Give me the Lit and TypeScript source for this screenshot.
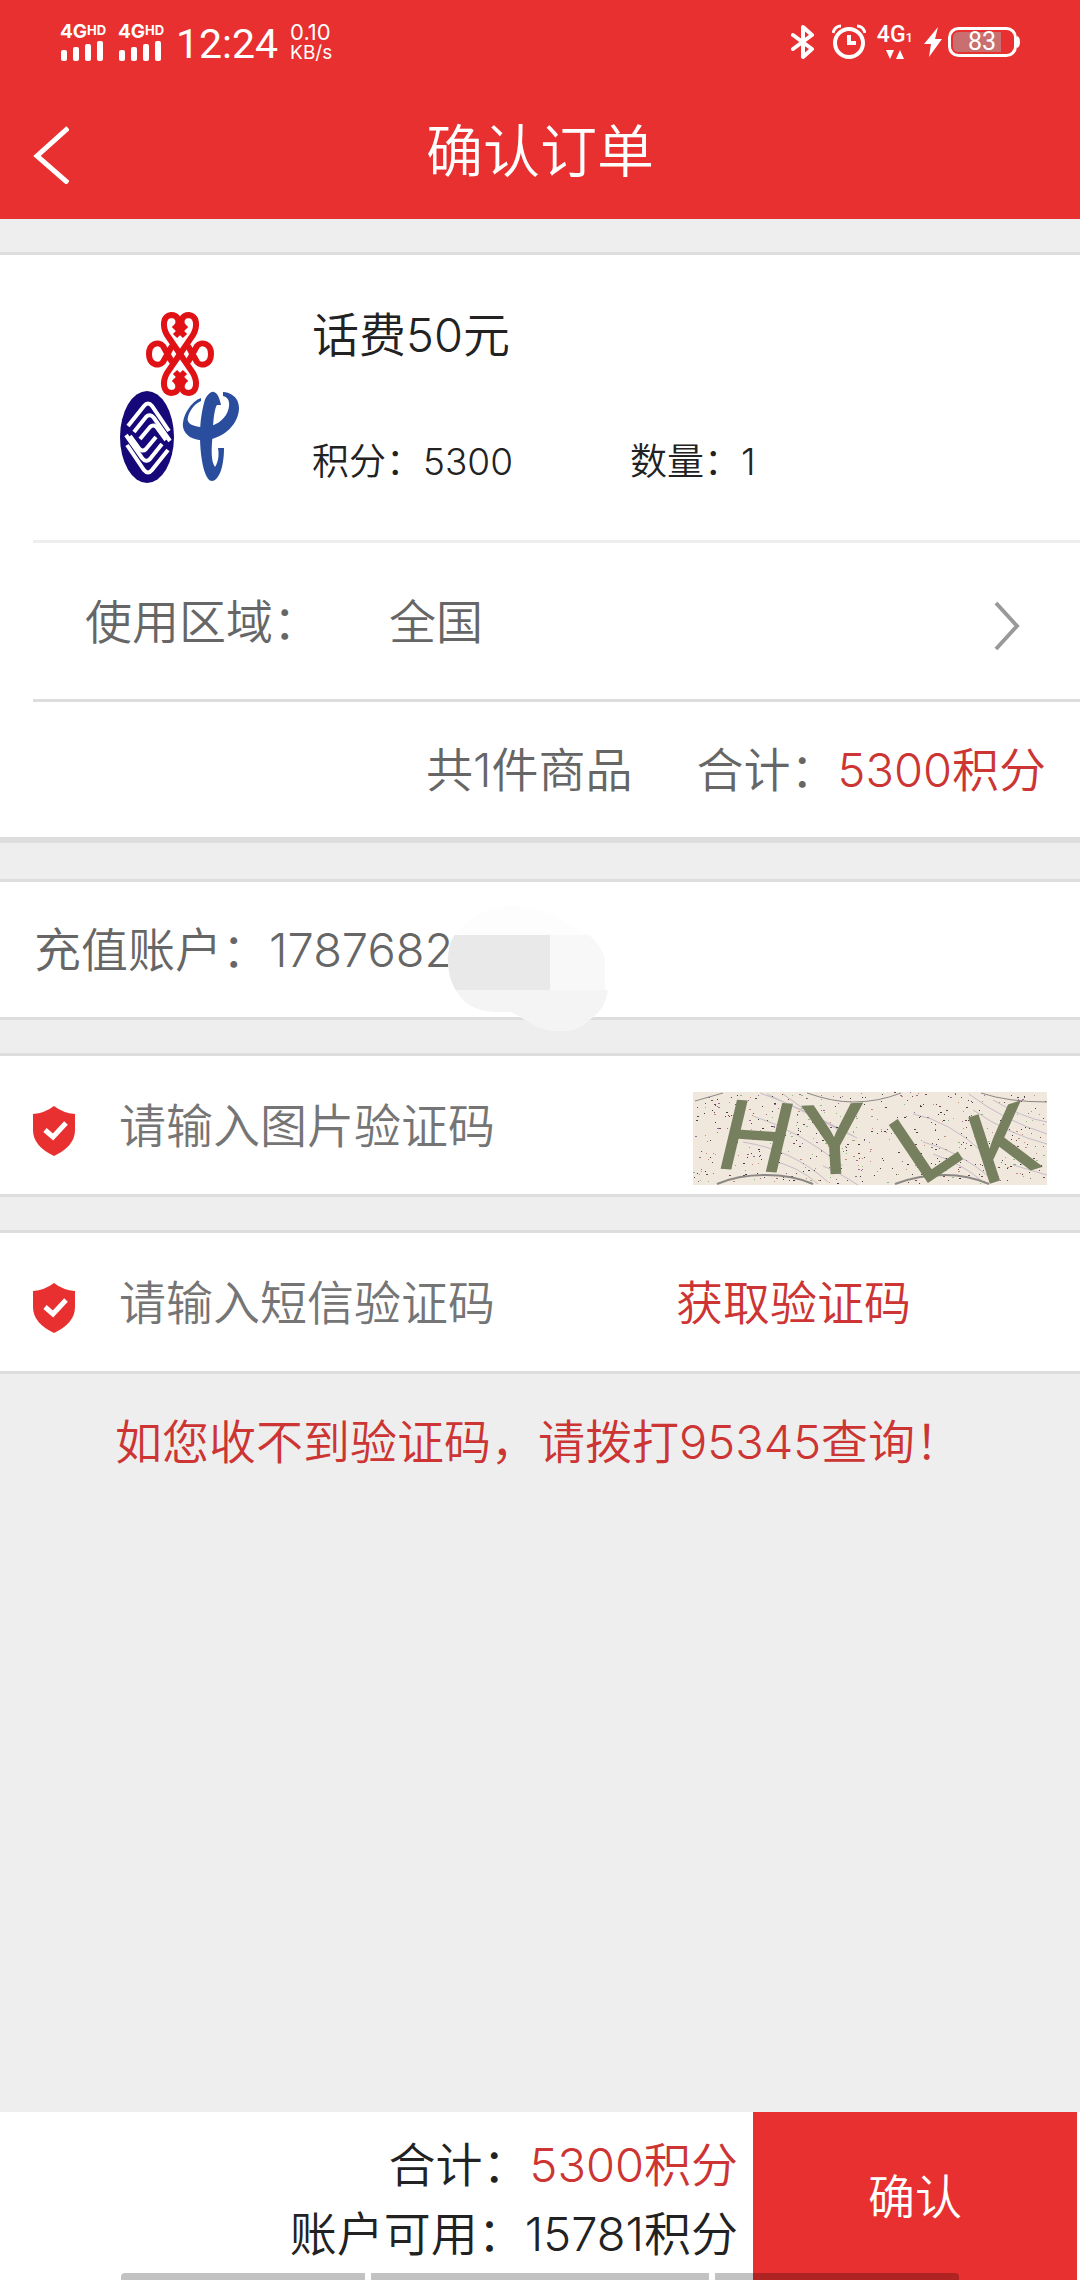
import { LitElement, html, svg, css } from "lit";
import { customElement } from "lit/decorators.js";

const fontStack = css`Inter, "Noto Sans CJK SC", sans-serif`;

/** Small repeatable generator, so the captcha speckle is stable. */
function seeded(seed: number) {
  let s = seed;
  return () => {
    s = (s * 16807) % 2147483647;
    return s / 2147483647;
  };
}

@customElement("status-bar")
export class StatusBar extends LitElement {
  static styles = css`
    :host {
      display: flex;
      justify-content: space-between;
      height: 84px;
      padding: 0 60px;
      box-sizing: border-box;
      color: #fff;
      font-family: Roboto, sans-serif;
    }
    .side {
      display: flex;
      align-items: center;
    }
    .left {
      gap: 12px;
    }
    .sim {
      width: 46px;
    }
    .net {
      display: flex;
      align-items: flex-start;
      font: 700 19px/16px Inter, sans-serif;
    }
    .hd {
      font-size: 13px;
      line-height: 12px;
    }
    .bars {
      display: block;
    }
    .clock {
      font-size: 41px;
      font-weight: 400;
      line-height: 48px;
      padding-top: 4px;
    }
    .speed {
      font: 400 19px/20px Inter, sans-serif;
    }
    .rate {
      font-size: 22px;
      line-height: 22px;
    }
    .cell {
      font: 500 23px/20px Roboto, sans-serif;
      text-align: center;
    }
    .sub {
      font-size: 13px;
    }
    .arrows {
      display: block;
      margin: 2px auto 0;
    }
    .battery {
      position: relative;
      display: flex;
      width: 72px;
      height: 30px;
    }
    .level {
      position: absolute;
      inset: 0 4px 0 0;
      font: 400 25px/30px Roboto, sans-serif;
      text-align: center;
    }
    .right svg {
      flex: none;
    }
    .alarm {
      margin: 0 11px 0 17px;
    }
    .bolt {
      margin: 0 6px 0 11px;
    }
  `;

  private sim() {
    return html`<div class="sim">
      <div class="net">4G<span class="hd">HD</span></div>
      <svg class="bars" width="44" height="21" fill="#fff">
        <rect x="1" y="10" width="6" height="11" rx="2" />
        <rect x="13" y="7" width="6" height="14" rx="2" />
        <rect x="25" y="4" width="6" height="17" rx="2" />
        <rect x="37" y="1" width="6" height="20" rx="2" />
      </svg>
    </div>`;
  }

  render() {
    return html`
      <div class="side left">
        ${this.sim()} ${this.sim()}
        <div class="clock">12:24</div>
        <div class="speed"><div class="rate">0.10</div><div>KB/s</div></div>
      </div>
      <div class="side right">
        <svg width="24" height="36" viewBox="0 0 24 36" fill="none" stroke="#fff" stroke-width="4" stroke-linecap="round" stroke-linejoin="round">
          <path d="M2 11 L21 25 L12 33 V3 L21 11 L2 25" />
        </svg>
        <svg class="alarm" width="34" height="36" viewBox="0 0 34 36" fill="none" stroke="#fff">
          <circle cx="17" cy="19" r="14" stroke-width="4" />
          <path d="M17 11 V19 H24" stroke-width="4" />
          <path d="M1 9 C2 5 5 2 9 2 M33 9 C32 5 29 2 25 2" stroke-width="3" />
        </svg>
        <div class="cell">
          4G<span class="sub">1</span>
          <svg class="arrows" width="20" height="9" fill="#fff"><path d="M1 0 H9 L5 9Z M11 9 H19 L15 0Z" /></svg>
        </div>
        <svg class="bolt" width="18" height="30" viewBox="0 0 18 30" fill="#fff">
          <path d="M14 0 L0 17 H7 L5 30 L18 12 H11Z" />
        </svg>
        <div class="battery">
          <svg width="72" height="30" viewBox="0 0 72 30">
            <path d="M11 5 H53 V25 H11 Q5 25 5 19 V11 Q5 5 11 5Z" fill="#c96f6f" />
            <rect x="1.500" y="1.500" width="66" height="27" rx="9" fill="none" stroke="#fff" stroke-width="3" />
            <path d="M69 9 Q72 10 72 15 Q72 20 69 21Z" fill="#fff" />
          </svg>
          <span class="level">83</span>
        </div>
      </div>
    `;
  }
}

@customElement("captcha-image")
export class CaptchaImage extends LitElement {
  static styles = css`
    :host {
      display: block;
    }
    .picture {
      display: block;
      width: 354px;
      height: 93px;
      overflow: visible;
    }
    .glyph {
      font: 500 96px Inter, sans-serif;
      fill: #76805f;
      text-anchor: middle;
    }
    .slanted {
      font-style: italic;
    }
  `;

  render() {
    const rnd = seeded(4711);
    const tones = ["#3c3a44", "#7b4550", "#9d6a9a", "#86c07a", "#c98a72", "#4a4a4a"];
    const dots = Array.from({ length: 560 }, () => ({
      x: Math.round(rnd() * 352),
      y: Math.round(rnd() * 91),
      w: rnd() > 0.7 ? 2 : 1,
      c: tones[Math.floor(rnd() * tones.length)],
    }));
    const scratches = [
      "M67 1 Q110 16 164 46", "M74 2 Q120 24 160 44", "M90 2 Q125 28 150 40",
      "M60 24 Q105 38 150 74", "M50 50 Q100 58 135 90", "M76 68 Q105 74 125 92",
      "M130 74 Q145 80 165 93", "M220 22 Q255 28 292 62", "M230 50 Q265 58 300 88",
      "M276 2 Q310 28 354 42", "M280 18 Q315 42 354 52", "M300 8 Q330 26 354 30",
      "M240 62 Q270 72 290 90", "M320 73 L354 83",
    ];
    return html`<svg class="picture" viewBox="0 0 354 93" role="img" aria-label="图片验证码">
      <rect width="354" height="93" fill="#f0e7dd" />
      ${scratches.map((d) => svg`<path d=${d} fill="none" stroke="#c6bcc8" stroke-width="1" />`)}
      ${dots.map((p) => svg`<rect x=${p.x} y=${p.y} width=${p.w} height="1" fill=${p.c} />`)}
      <g fill="none" stroke="#8b8784" stroke-width="1">
        <path d="M2 9 Q16 5 30 1 M114 1 Q140 10 160 10 Q185 10 208 1 M288 1 Q315 10 354 10" />
        <path d="M24 92 Q45 83 72 83 Q100 83 120 92 M202 92 Q225 83 252 83 Q275 83 296 92" stroke-width="2" />
      </g>
      <text class="glyph slanted" x="60" y="79" transform="rotate(4 60 79)">H</text>
      <text class="glyph" x="143" y="82" transform="rotate(-3 143 82)">Y</text>
      <text class="glyph" x="251" y="80" transform="rotate(-34 251 80)">L</text>
      <text class="glyph" x="321" y="84" transform="rotate(-18 321 84)">K</text>
    </svg>`;
  }
}

@customElement("app-root")
export class AppRoot extends LitElement {
  static styles = css`
    :host {
      display: flex;
      flex-direction: column;
      min-height: 100vh;
      background: #eee;
      color: #666;
      font-family: ${fontStack};
      font-size: 47px;
      font-weight: 350;
      line-height: 69px;
    }
    button,
    input {
      font: inherit;
      color: inherit;
      background: none;
      border: 0;
      padding: 0;
      margin: 0;
      border-radius: 0;
      text-align: left;
    }
    .top {
      background: #e7302f;
      color: #fff;
    }
    .nav {
      display: grid;
      grid-template-columns: 1fr auto 1fr;
      align-items: center;
      height: 135px;
      padding: 0 33px;
    }
    .title {
      margin: 0;
      font-size: 57px;
      font-weight: inherit;
    }
    .back {
      display: block;
      padding-top: 6px;
    }
    .block {
      display: block;
    }
    .content {
      display: flex;
      flex-direction: column;
      gap: 33px;
      padding-top: 33px;
      flex: 1;
    }
    .card {
      position: relative;
      background: #fff;
      border-top: 3px solid #dcdedd;
      border-bottom: 3px solid #dcdedd;
    }
    .order {
      border-bottom-width: 6px;
      margin-bottom: 3px;
    }
    .product {
      display: flex;
      gap: 72px;
      height: 285px;
      padding: 56px 33px 0 120px;
      box-sizing: border-box;
      color: #222;
    }
    .info {
      flex: 1;
      line-height: 48px;
    }
    .name {
      margin: 0;
      font-size: 47px;
      font-weight: inherit;
    }
    .facts {
      display: flex;
      gap: 117px;
      margin-top: 79px;
      font-size: 37px;
    }
    .line {
      display: flex;
      align-items: center;
      margin-left: 33px;
      border-top: 3px solid #eee;
    }
    .region {
      height: 159px;
      padding: 0 60px 0 52px;
      box-sizing: border-box;
    }
    .pick {
      display: flex;
      flex: 1;
      align-items: center;
      gap: 69px;
    }
    .chevron {
      margin-left: auto;
      padding-top: 10px;
    }
    .sum {
      justify-content: flex-end;
      gap: 64px;
      height: 138px;
      padding-right: 34px;
      box-sizing: border-box;
      border-color: #dcdedd;
    }
    .red {
      color: #cc3533;
    }
    .account {
      height: 135px;
      padding: 0 34px;
      display: flex;
      align-items: center;
    }
    .mask {
      position: absolute;
      left: 448px;
      top: 24px;
    }
    .field {
      display: flex;
      align-items: center;
      height: 138px;
      padding: 0 33px;
    }
    .shield {
      flex: none;
      margin: 12px 44px 0 0;
    }
    .captcha {
      align-self: flex-end;
      margin-bottom: 9px;
    }
    .entry {
      flex: 1;
      min-width: 0;
      height: 100%;
      outline: none;
    }
    .entry::placeholder {
      color: #757575;
      opacity: 1;
    }
    .send {
      flex: none;
      width: 371px;
      height: 100%;
    }
    .hint {
      margin: 0;
      padding: 0 33px 0 115px;
    }
    .footer {
      position: relative;
      display: flex;
      height: 168px;
      background: #fff;
      color: #222;
    }
    .totals {
      flex: 1;
      padding: 18px 15px 0 0;
      text-align: right;
    }
    .confirm {
      width: 30%;
      margin-right: 3px;
      background: #e7302f;
      color: #fff;
      text-align: center;
    }
    .gesture {
      position: absolute;
      left: 121px;
      right: 121px;
      bottom: 0;
      display: flex;
      gap: 6px;
      height: 7px;
      overflow: hidden;
      border-radius: 4px 4px 0 0;
      pointer-events: none;
    }
    .grip {
      flex: 244;
      background: rgba(0, 0, 0, 0.24);
    }
    .mid {
      flex: 338;
    }
  `;

  private logos() {
    const loop = "M60 43 L47 24 C42 15 43 5 51 4 C58 4 61 11 56 16 L65 25";
    const bar = "M60 43 L73 24 C78 15 77 5 69 4 C62 4 59 11 64 16 L55 25";
    const band = ["M8 115 L24 95 Q28 90 32 95 L49 120", "M14 121 L26 106 Q30 102 34 107 L50 130", "M20 128 L30 116 Q34 112 38 118 L46 129"];
    return html`<svg class="block" width="120" height="172" viewBox="0 0 120 172" role="img" aria-label="话费">
      <g fill="none" stroke="#e01216" stroke-width="6">
        <path d=${loop} /><path d=${bar} />
        <g transform="rotate(180 60 43)"><path d=${loop} /><path d=${bar} /></g>
        <path d="M52 51 L43 35 C39 30 29 32 29 43 C29 54 39 56 43 51 L52 35" />
        <path d="M68 51 L77 35 C81 30 91 32 91 43 C91 54 81 56 77 51 L68 35" />
      </g>
      <ellipse cx="27" cy="126" rx="27" ry="46" fill="#17087a" />
      <g fill="none" stroke="#fff" stroke-width="4">
        ${band.map((d) => svg`<path d=${d} /><path d=${d} transform="rotate(180 28 127)" />`)}
      </g>
      <g fill="#2a4d9d">
        <path d="M84 92 C86 84 91 80 94 81 C98 82 100 89 101 94 L97 94 C95 96 93 108 93 120 C91 140 91 150 95 156 C99 150 99 142 98 137 L104 137 C104 158 98 170 92 170 C84 170 80 145 80 125 C80 110 82 100 84 92Z" />
        <path d="M81 87 C72 90 62 104 63 116 C65 126 75 130 86 129 C105 127 119 112 119 97 C119 86 110 81 103 81 L103 85 C110 86 111 95 106 104 C100 113 90 117 80 116 C72 115 66 112 68 106 C70 98 76 92 81 90Z" />
      </g>
    </svg>`;
  }

  private shield() {
    return html`<svg class="shield" width="42" height="50" viewBox="0 0 42 50" aria-hidden="true">
      <path d="M0 8 Q12 7 21 0 Q30 7 42 8 V24 Q42 40 21 50 Q0 40 0 24Z" fill="#e7302f" />
      <path d="M12 24 L20 31 L33 17" fill="none" stroke="#fff" stroke-width="5" />
    </svg>`;
  }

  render() {
    return html`
      <header class="top">
        <status-bar></status-bar>
        <div class="nav">
          <button class="back" aria-label="返回">
            <svg class="block" width="36" height="58" viewBox="0 0 36 58" fill="none" stroke="#fff" stroke-width="5">
              <path d="M35 2 L4 30 L35 57" />
            </svg>
          </button>
          <h1 class="title">确认订单</h1>
        </div>
      </header>

      <main class="content">
        <section class="card order">
          <div class="product">
            ${this.logos()}
            <div class="info">
              <h2 class="name">话费50元</h2>
              <div class="facts"><span>积分：5300</span><span>数量：1</span></div>
            </div>
          </div>
          <div class="line region">
            <button class="pick">
              <span>使用区域：</span><span>全国</span>
              <svg class="chevron" width="26" height="52" viewBox="0 0 26 52" fill="none" stroke="#999" stroke-width="4">
                <path d="M2 3 L23 26 L2 49" />
              </svg>
            </button>
          </div>
          <div class="line sum">
            <span>共1件商品</span>
            <span>合计：<span class="red">5300积分</span></span>
          </div>
        </section>

        <section class="card account">
          <span>充值账户：1787682</span>
          <svg class="mask" width="160" height="126" viewBox="0 0 160 126" aria-hidden="true">
            <clipPath id="blob">
              <path d="M0 54 C0 34 8 24 23 14 C35 4 50 0 65 0 C82 0 96 4 108 11 L141 29 Q152 38 157 52 V84 H160 C158 98 151 108 141 114 C132 123 122 125 110 125 Q98 125 87 119 L63 106 H49 Q28 106 15 94 Q0 78 0 54Z" />
            </clipPath>
            <g clip-path="url(#blob)">
              <rect width="160" height="126" fill="#fdfdfd" />
              <rect y="29" width="102" height="55" fill="#e9e9e9" />
              <rect x="102" y="29" width="58" height="55" fill="#f8f8f8" />
              <rect y="84" width="160" height="42" fill="#f4f4f4" />
            </g>
          </svg>
        </section>

        <section class="card field">
          ${this.shield()}
          <input class="entry" type="text" aria-label="图片验证码" placeholder="请输入图片验证码" />
          <captcha-image class="captcha"></captcha-image>
        </section>

        <section class="card field">
          ${this.shield()}
          <input class="entry" type="text" aria-label="短信验证码" placeholder="请输入短信验证码" />
          <button class="send red">获取验证码</button>
        </section>

        <p class="hint red">如您收不到验证码，请拨打95345查询！</p>
      </main>

      <footer class="footer">
        <div class="totals">
          <div>合计：<span class="red">5300积分</span></div>
          <div>账户可用：15781积分</div>
        </div>
        <button class="confirm">确认</button>
        <div class="gesture">
          <span class="grip"></span><span class="grip mid"></span><span class="grip"></span>
        </div>
      </footer>
    `;
  }
}
